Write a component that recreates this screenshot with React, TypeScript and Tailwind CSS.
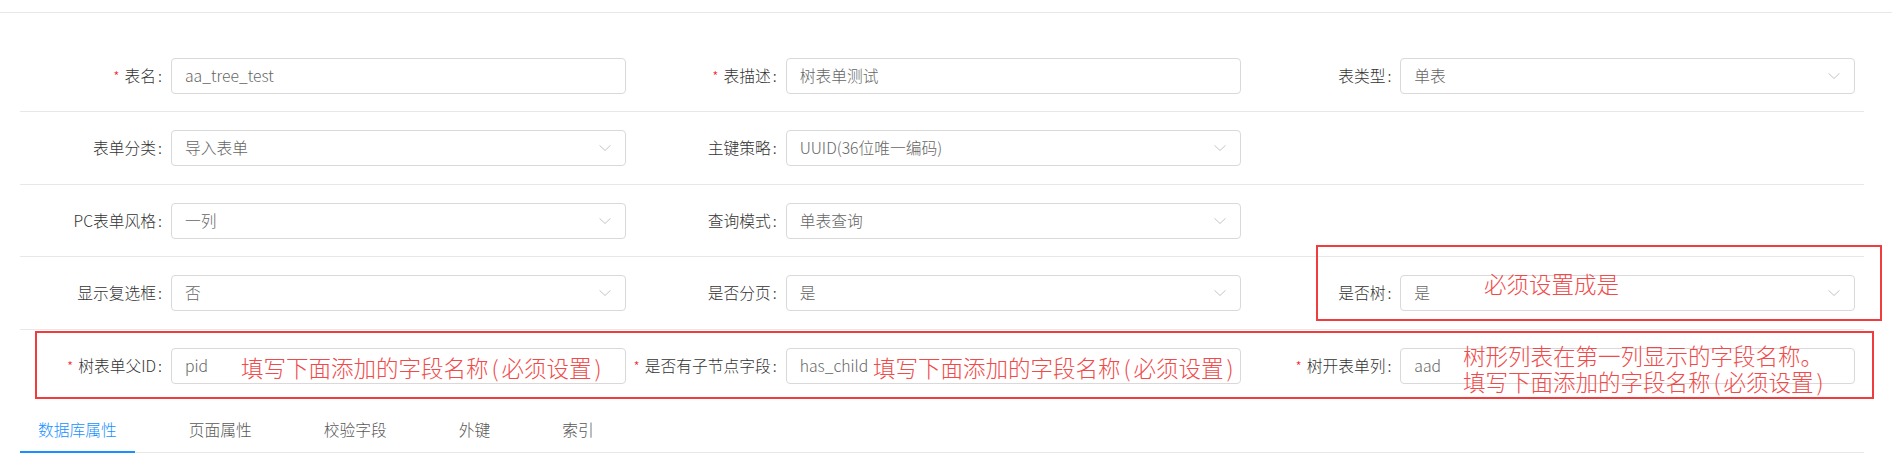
import React from "react";

type Field = { label: string; req?: boolean; value: string; select?: boolean } | null;

const rows: Field[][] = [
  [
    { label: "表名", req: true, value: "aa_tree_test" },
    { label: "表描述", req: true, value: "树表单测试" },
    { label: "表类型", value: "单表", select: true },
  ],
  [
    { label: "表单分类", value: "导入表单", select: true },
    { label: "主键策略", value: "UUID(36位唯一编码)", select: true },
    null,
  ],
  [
    { label: "PC表单风格", value: "一列", select: true },
    { label: "查询模式", value: "单表查询", select: true },
    null,
  ],
  [
    { label: "显示复选框", value: "否", select: true },
    { label: "是否分页", value: "是", select: true },
    { label: "是否树", value: "是", select: true },
  ],
  [
    { label: "树表单父ID", req: true, value: "pid" },
    { label: "是否有子节点字段", req: true, value: "has_child" },
    { label: "树开表单列", req: true, value: "aad" },
  ],
];

const tabs = ["数据库属性", "页面属性", "校验字段", "外键", "索引"];

function Chevron() {
  return (
    <svg width="12" height="7" viewBox="0 0 12 7" className="absolute right-[14px] top-1/2 -translate-y-1/2">
      <path d="M0.5 0.8 L6 6 L11.5 0.8" fill="none" stroke="#c4c4c4" strokeWidth="1" />
    </svg>
  );
}

function Item({ f }: { f: Field }) {
  if (!f) return <div />;
  return (
    <div className="flex items-center">
      <div className="w-[151px] shrink-0 flex justify-end items-center pr-[9px] whitespace-nowrap text-[#333333]">
        {f.req && <span className="text-[#f5222d] mr-[5px] text-[14px] leading-none">*</span>}
        <span>{f.label}</span>
        <span className="ml-[2px]">:</span>
      </div>
      <div className="relative w-[455px] h-[36px] border border-[#d9d9d9] rounded-[4px] bg-white flex items-center pl-[13px] text-[#666666]">
        <span className="whitespace-nowrap">{f.value}</span>
        {f.select && <Chevron />}
      </div>
    </div>
  );
}

function Paren({ c }: { c: string }) {
  return <span className="inline-block w-[13px] text-center">{c}</span>;
}

function Note() {
  return (
    <>
      填写下面添加的字段名称<Paren c="(" />必须设置<Paren c=")" />
    </>
  );
}

export default function App() {
  return (
    <div
      className="relative w-[1892px] h-[468px] bg-white overflow-hidden text-[15.75px] leading-[24px] font-light"
      style={{ fontFamily: '"Noto Sans CJK SC", "Noto Sans", sans-serif' }}
    >
      <div className="h-[13px] border-b border-[#e8e8e8]" />
      <div className="h-[26.5px]" />
      <div className="mx-[20px] w-[1844px]">
        {rows.map((r, i) => (
          <div
            key={i}
            className={
              i < rows.length - 1
                ? "grid grid-cols-3 pt-[18px] pb-[17.5px] border-b border-[#e8e8e8]"
                : "grid grid-cols-3 pt-[18px] pb-[17.5px]"
            }
          >
            {r.map((f, j) => (
              <Item key={j} f={f} />
            ))}
          </div>
        ))}
        <div className="flex border-b border-[#e8e8e8]">
          {tabs.map((t, i) => (
            <div
              key={t}
              className={
                i === 0
                  ? "relative px-[18px] pt-[17px] pb-[10px] mr-[36px] text-[#1890ff]"
                  : "relative px-[18px] pt-[17px] pb-[10px] mr-[36px] text-[#595959]"
              }
            >
              {t}
              {i === 0 && <div className="absolute left-0 right-0 -bottom-px h-[2px] bg-[#1890ff]" />}
            </div>
          ))}
        </div>
      </div>

      {/* annotations */}
      <div className="absolute left-[1316px] top-[245px] w-[566px] h-[76px] border-2 border-[#f03c3c]" />
      <div className="absolute left-[35px] top-[331px] w-[1839px] h-[68px] border-2 border-[#f03c3c]" />
      <div className="absolute left-[1484px] top-[270px] text-[22.5px] leading-[26px] text-[#f04a4a] whitespace-nowrap">
        必须设置成是
      </div>
      <div className="absolute left-[241px] top-[354px] text-[22.5px] leading-[26px] text-[#f04a4a] whitespace-nowrap">
        <Note />
      </div>
      <div className="absolute left-[873px] top-[354px] text-[22.5px] leading-[26px] text-[#f04a4a] whitespace-nowrap">
        <Note />
      </div>
      <div className="absolute left-[1463px] top-[342px] text-[22.5px] leading-[26px] text-[#f04a4a] whitespace-nowrap">
        <div>树形列表在第一列显示的字段名称。</div>
        <div>
          <Note />
        </div>
      </div>
    </div>
  );
}
